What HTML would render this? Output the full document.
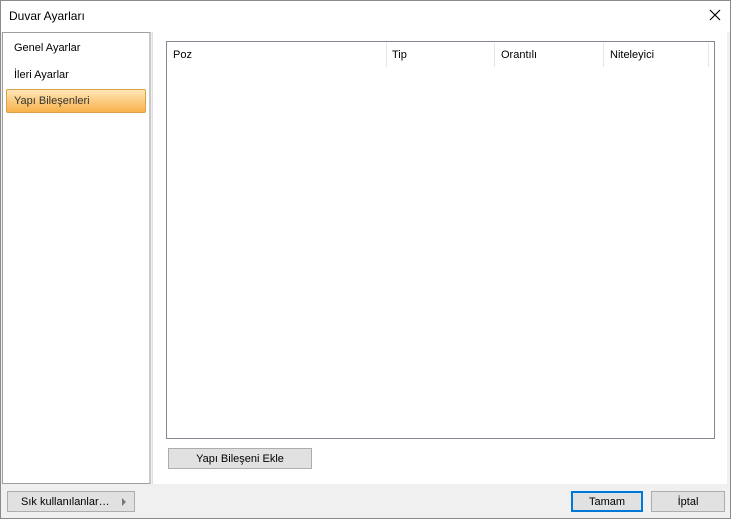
<!DOCTYPE html>
<html><head><style>
*{box-sizing:border-box;margin:0;padding:0}
body{width:731px;height:519px;overflow:hidden;background:#f0f0f0;font-family:"Liberation Sans",sans-serif;font-size:11px;color:#000;position:relative}
.a{position:absolute}
.btn{position:absolute;background:#e1e1e1;border:1px solid #adadad;text-align:center;line-height:20px;font-size:11px}
</style></head><body>
<div class="a" style="left:0;top:0;width:731px;height:519px;border:1px solid #8a8a8a"></div>
<div class="a" style="left:1px;top:1px;width:729px;height:31px;background:#fff"></div>
<div class="a" style="left:9px;top:9px;font-size:12px">Duvar Ayarları</div>
<svg class="a" style="left:709px;top:9px" width="12" height="12"><path d="M1 1L11 11M11 1L1 11" stroke="#000" stroke-width="1.2"/></svg>
<div class="a" style="left:2px;top:32px;width:149px;height:452px;background:#fff;border:1px solid #a0a0a0;border-right:2px solid #c8c8c8"></div>
<div class="a" style="left:14px;top:42px">Genel Ayarlar</div>
<div class="a" style="left:14px;top:69px">İleri Ayarlar</div>
<div class="a" style="left:6px;top:89px;width:140px;height:24px;border:1px solid #d9a24a;border-radius:2px;background:linear-gradient(#fde6b8,#fbc97a 55%,#f7b24c)"></div>
<div class="a" style="left:14px;top:95px;color:#333">Yapı Bileşenleri</div>
<div class="a" style="left:152px;top:32px;width:575px;height:452px;background:#fff;border-left:1px solid #e0e0e0"></div>
<div class="a" style="left:166px;top:41px;width:549px;height:398px;border:1px solid #828790;background:#fff"></div>
<div class="a" style="left:167px;top:42px;width:547px;height:25px;background:#fff"></div>
<div class="a" style="left:386px;top:43px;width:1px;height:24px;background:#e5e5e5"></div>
<div class="a" style="left:494px;top:43px;width:1px;height:24px;background:#e5e5e5"></div>
<div class="a" style="left:603px;top:43px;width:1px;height:24px;background:#e5e5e5"></div>
<div class="a" style="left:708px;top:43px;width:1px;height:24px;background:#e5e5e5"></div>
<div class="a" style="left:173px;top:49px">Poz</div>
<div class="a" style="left:392px;top:49px">Tip</div>
<div class="a" style="left:501px;top:49px">Orantılı</div>
<div class="a" style="left:610px;top:49px">Niteleyici</div>
<div class="btn" style="left:168px;top:448px;width:144px;height:21px">Yapı Bileşeni Ekle</div>
<div class="btn" style="left:7px;top:491px;width:128px;height:21px;text-align:left;padding-left:13px">Sık kullanılanlar…</div>
<svg class="a" style="left:122px;top:498px" width="5" height="8"><path d="M0 0L4 4L0 8Z" fill="#777"/></svg>
<div class="btn" style="left:571px;top:491px;width:72px;height:21px;border:2px solid #0078d7;line-height:18px">Tamam</div>
<div class="btn" style="left:651px;top:491px;width:74px;height:21px">İptal</div>
</body></html>
